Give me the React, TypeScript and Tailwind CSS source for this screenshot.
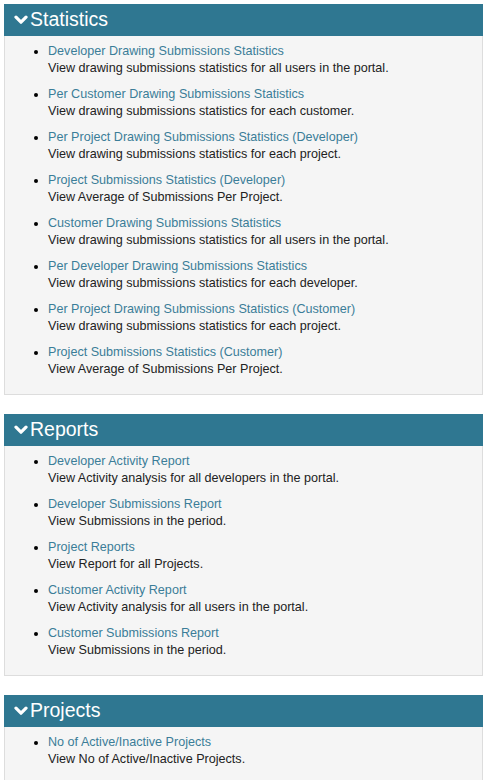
import type { ReactNode } from "react";

type Item = { title: string; desc: string };

const statistics: Item[] = [
  { title: "Developer Drawing Submissions Statistics", desc: "View drawing submissions statistics for all users in the portal." },
  { title: "Per Customer Drawing Submissions Statistics", desc: "View drawing submissions statistics for each customer." },
  { title: "Per Project Drawing Submissions Statistics (Developer)", desc: "View drawing submissions statistics for each project." },
  { title: "Project Submissions Statistics (Developer)", desc: "View Average of Submissions Per Project." },
  { title: "Customer Drawing Submissions Statistics", desc: "View drawing submissions statistics for all users in the portal." },
  { title: "Per Developer Drawing Submissions Statistics", desc: "View drawing submissions statistics for each developer." },
  { title: "Per Project Drawing Submissions Statistics (Customer)", desc: "View drawing submissions statistics for each project." },
  { title: "Project Submissions Statistics (Customer)", desc: "View Average of Submissions Per Project." },
];

const reports: Item[] = [
  { title: "Developer Activity Report", desc: "View Activity analysis for all developers in the portal." },
  { title: "Developer Submissions Report", desc: "View Submissions in the period." },
  { title: "Project Reports", desc: "View Report for all Projects." },
  { title: "Customer Activity Report", desc: "View Activity analysis for all users in the portal." },
  { title: "Customer Submissions Report", desc: "View Submissions in the period." },
];

const projects: Item[] = [
  { title: "No of Active/Inactive Projects", desc: "View No of Active/Inactive Projects." },
];

function Chevron() {
  return (
    <svg className="w-[14px] h-[10px]" viewBox="0 0 14 10" fill="none" stroke="currentColor">
      <path d="M2 2.2 L7 7.2 L12 2.2" strokeWidth={3.2} strokeLinecap="round" strokeLinejoin="round" />
    </svg>
  );
}

function Panel({ title, items, children }: { title: string; items: Item[]; children?: ReactNode }) {
  return (
    <section className="mb-[19px]">
      <div className="flex items-center h-8 bg-[#2f7791] text-white pl-[10px] gap-[2px]">
        <Chevron />
        <h2 className="text-[19.5px] leading-none">{title}</h2>
      </div>
      <div className="bg-[#f5f5f5] border border-t-0 border-[#dddddd] pt-[7px] pb-[16px]">
        <ul className="list-disc pl-[43px] flex flex-col gap-[9px] text-[12.6px] leading-[17px]">
          {items.map((it) => (
            <li key={it.title}>
              <a href="#" className="text-[#3b7d98]">{it.title}</a>
              <div className="text-[#222222]">{it.desc}</div>
            </li>
          ))}
        </ul>
        {children}
      </div>
    </section>
  );
}

export default function App() {
  return (
    <div className="bg-white min-h-screen px-[4px] pt-[4px] font-['Liberation_Sans',Arial,sans-serif]">
      <Panel title="Statistics" items={statistics} />
      <Panel title="Reports" items={reports} />
      <Panel title="Projects" items={projects} />
    </div>
  );
}
